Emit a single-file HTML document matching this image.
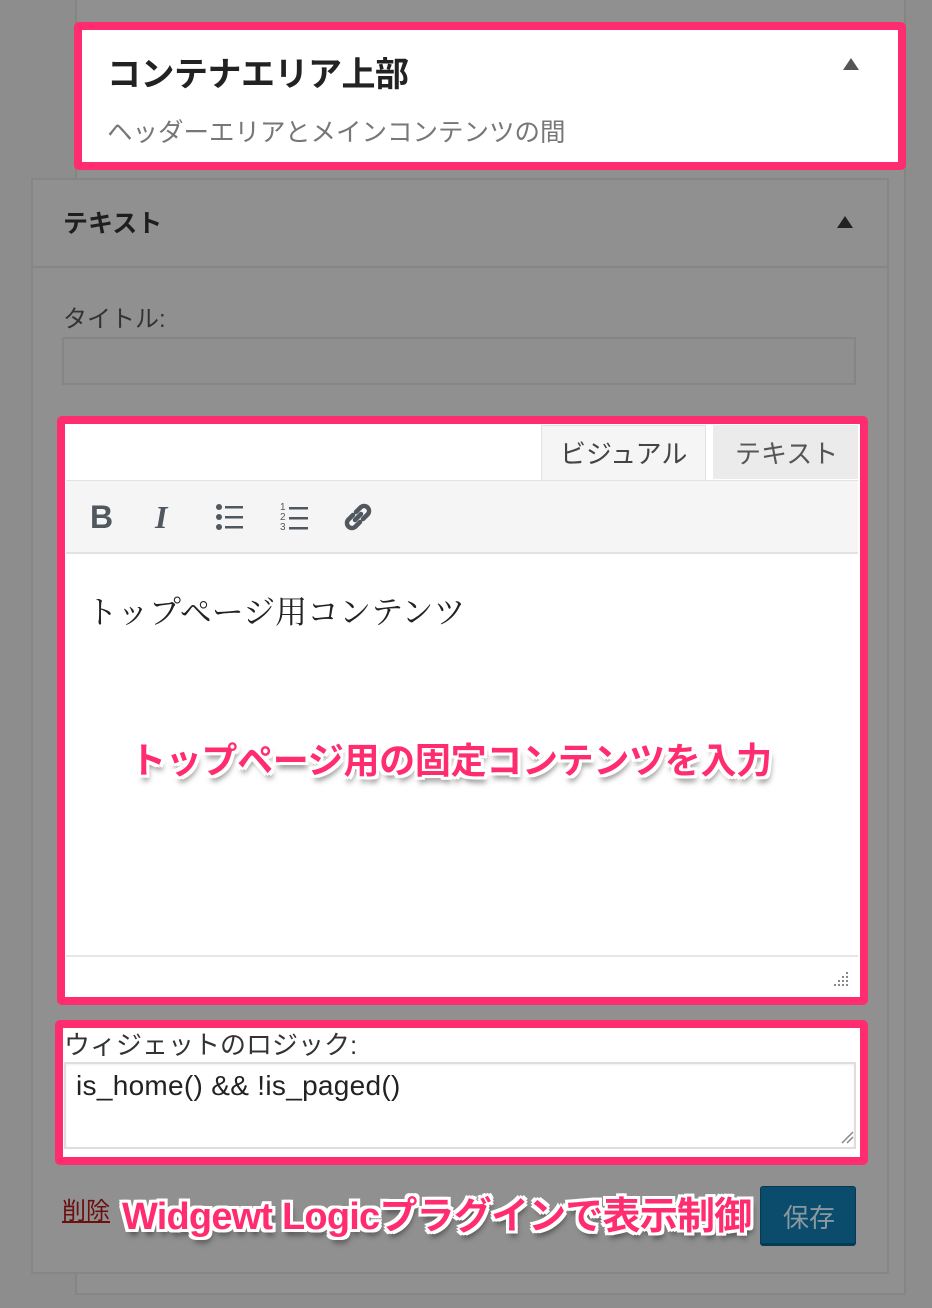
<!DOCTYPE html>
<html><head><meta charset="utf-8"><style>
*{margin:0;padding:0;box-sizing:border-box}
body{width:932px;height:1308px;background:#8d8d8d;position:relative;overflow:hidden;font-family:"Liberation Sans","Noto Sans CJK JP",sans-serif}
.a{position:absolute}
.pink{border:8px solid #ff2d6f;border-radius:5px;background:#fff}
.ov{font-weight:bold;color:#ff2d6f;white-space:nowrap;text-shadow:-3px -3px 0 #fff,3px -3px 0 #fff,-3px 3px 0 #fff,3px 3px 0 #fff,0 3px 0 #fff,0 -3px 0 #fff,3px 0 0 #fff,-3px 0 0 #fff,2px 6px 6px rgba(0,0,0,.5)}
.tri{width:0;height:0;border-left:8px solid transparent;border-right:8px solid transparent;border-bottom:12px solid #555}
</style></head><body>
<div class="a" style="left:75px;top:-10px;width:831px;height:1305px;background:#909090;border:2px solid #858585"></div>
<div class="a pink" style="left:74px;top:22px;width:832px;height:148px"></div>
<div class="a" style="left:107px;top:47px;font-size:34px;font-weight:bold;color:#222;letter-spacing:-0.5px">コンテナエリア上部</div>
<div class="a tri" style="left:843px;top:58px"></div>
<div class="a" style="left:107px;top:112px;font-size:25.5px;color:#777">ヘッダーエリアとメインコンテンツの間</div>

<div class="a" style="left:31px;top:178px;width:858px;height:1096px;background:#909090;border:2px solid #868686"></div>
<div class="a" style="left:31px;top:266px;width:858px;height:2px;background:#868686"></div>
<div class="a" style="left:63px;top:204px;font-size:25px;font-weight:bold;color:#1e1e1e">テキスト</div>
<div class="a tri" style="left:837px;top:216px;border-bottom-color:#222"></div>
<div class="a" style="left:63px;top:299px;font-size:24px;color:#333">タイトル:</div>
<div class="a" style="left:62px;top:337px;width:794px;height:48px;border:2px solid #858585;background:#8f8f8f"></div>

<div class="a pink" style="left:57px;top:416px;width:811px;height:589px"></div>
<div class="a" style="left:541px;top:425px;width:165px;height:56px;background:#f5f5f5;border:1px solid #e2e2e2;border-bottom:none"></div>
<div class="a" style="left:560px;top:434px;font-size:26px;color:#444">ビジュアル</div>
<div class="a" style="left:713px;top:425px;width:145px;height:54px;background:#ebebeb"></div>
<div class="a" style="left:735px;top:434px;font-size:26px;color:#555">テキスト</div>
<div class="a" style="left:66px;top:480px;width:792px;height:74px;background:#f5f5f5;border-top:1px solid #e2e2e2;border-bottom:2px solid #e2e2e2"></div>
<div class="a" style="left:90px;top:499px;font-size:32px;font-weight:bold;color:#50575e">B</div>
<div class="a" style="left:155px;top:499px;font-size:32px;font-weight:bold;font-style:italic;color:#50575e;font-family:'Liberation Serif',serif">I</div>
<svg class="a" style="left:214px;top:502px" width="32" height="30" viewBox="0 0 32 30" fill="#50575e"><circle cx="5" cy="5" r="3"/><circle cx="5" cy="15" r="3"/><circle cx="5" cy="25" r="3"/><rect x="11" y="4" width="18" height="2.5"/><rect x="11" y="14" width="18" height="2.5"/><rect x="11" y="24" width="18" height="2.5"/></svg>
<svg class="a" style="left:280px;top:500px" width="32" height="34" viewBox="0 0 32 34" fill="#50575e" font-size="10" font-family="Liberation Sans"><text x="0" y="10">1</text><text x="0" y="20">2</text><text x="0" y="30">3</text><rect x="9" y="7" width="19" height="2.5"/><rect x="9" y="17" width="19" height="2.5"/><rect x="9" y="27" width="19" height="2.5"/></svg>
<svg class="a" style="left:340px;top:499px" width="36" height="36" viewBox="0 0 36 36" fill="none" stroke="#50575e" stroke-width="4.5" stroke-linecap="round"><path d="M15 21 L21 15"/><path d="M13 16 L8 21 a5 5 0 0 0 7 7 L20 23"/><path d="M16 13 L21 8 a5 5 0 0 1 7 7 L23 20"/></svg>
<div class="a" style="left:86px;top:587px;font-size:32px;color:#222;font-family:'Liberation Serif','Noto Serif CJK SC',serif">トップページ用コンテンツ</div>
<div class="a ov" style="left:130px;top:732px;font-size:36px;letter-spacing:-0.3px">トップページ用の固定コンテンツを入力</div>
<div class="a" style="left:66px;top:955px;width:792px;height:2px;background:#e6e6e6"></div>
<svg class="a" style="left:830px;top:970px" width="20" height="20" fill="#888"><rect x="16" y="2" width="2" height="2"/><rect x="12" y="6" width="2" height="2"/><rect x="16" y="6" width="2" height="2"/><rect x="8" y="10" width="2" height="2"/><rect x="12" y="10" width="2" height="2"/><rect x="16" y="10" width="2" height="2"/><rect x="4" y="14" width="2" height="2"/><rect x="8" y="14" width="2" height="2"/><rect x="12" y="14" width="2" height="2"/><rect x="16" y="14" width="2" height="2"/></svg>

<div class="a pink" style="left:55px;top:1020px;width:813px;height:145px"></div>
<div class="a" style="left:64px;top:1025px;font-size:26px;color:#333">ウィジェットのロジック:</div>
<div class="a" style="left:64px;top:1062px;width:792px;height:87px;border:2px solid #ddd;box-shadow:inset 0 1px 2px rgba(0,0,0,.07)"></div>
<div class="a" style="left:76px;top:1070px;font-size:28px;color:#222;letter-spacing:0.3px">is_home() &amp;&amp; !is_paged()</div>
<svg class="a" style="left:840px;top:1130px" width="14" height="14" stroke="#888" stroke-width="1.5"><path d="M2 13 L13 2 M7 13 L13 7"/></svg>

<div class="a" style="left:62px;top:1191px;font-size:24px;color:#6b0f0f;text-decoration:underline">削除</div>
<div class="a" style="left:760px;top:1186px;width:96px;height:58px;background:#0b4b6b;border:1px solid #063a55;border-radius:3px;box-shadow:0 2px 0 #063a55"></div>
<div class="a" style="left:783px;top:1198px;font-size:26px;color:#8a98a0">保存</div>
<div class="a ov" style="left:122px;top:1185px;font-size:38px;letter-spacing:-0.8px">Widgewt Logicプラグインで表示制御</div>
</body></html>
